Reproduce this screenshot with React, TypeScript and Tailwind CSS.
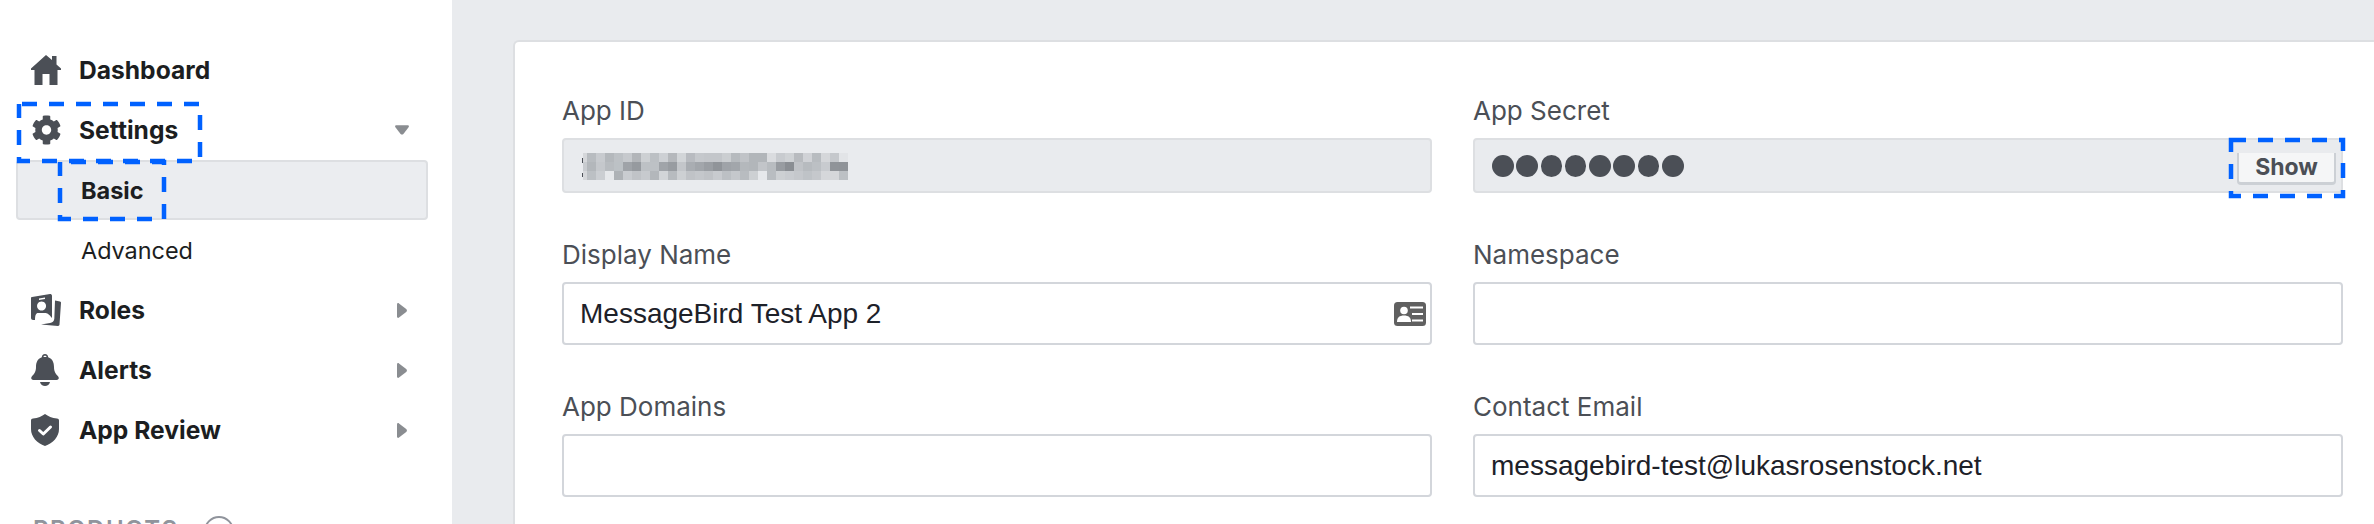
import { FaCog } from 'react-icons/fa'

const mosaicEdge = ['#d5d7da', '#c8cbcf', '#d5d7da']

const mosaic = [
  ['#b8bcc0','#c8cbcf','#b4b8bc','#bdc1c5','#c6c9cd','#b2b5b9','#cdd0d3','#bcc0c4','#cdd0d4','#b5b8bc','#d2d5d8','#b8bbc0','#c5c8cc','#c3c6ca','#c3c6ca','#cbced1','#b6babe','#c0c3c7','#b2b6ba','#b2b6ba','#dadcdf','#c8cbcf','#cfd2d5','#b8bbbf','#d0d2d6','#b8bcc0','#d5d7da','#c5c8cc','#e2e4e7'],
  ['#b3b7bb','#c5c8cc','#b8bcc0','#bcc1c5','#9fa3a8','#969a9f','#bdc1c5','#bdc1c5','#a0a4a9','#989ca1','#c3c6ca','#a9adb2','#a2a6ab','#9a9ea3','#909499','#9fa3a8','#a2a6ab','#b4b8bc','#b2b6ba','#c2c5c9','#b8bcc0','#989ca1','#8a8e93','#c0c3c7','#b7bbbf','#bcc0c4','#c8cbcf','#909499','#8f9398'],
  ['#bcc0c4','#cbced2','#e6e8eb','#aeb2b6','#c9ccd0','#c0c3c7','#c7cace','#b3b7bb','#d2d5d8','#b7bbbf','#cdd0d3','#c0c3c7','#c4c7cb','#c0c3c7','#c8cbcf','#bcc0c4','#c5c8cc','#b8bcc0','#cdd0d3','#e6e8eb','#b9bdc1','#cdd0d3','#c9ccd0','#c5c8cc','#bfc3c7','#c5c8cc','#d5d7da','#d5d7da','#bcc0c4'],
]

function HomeIcon() {
  return (
    <svg viewBox="0 0 30 30" className="h-[30px] w-[30px] fill-[#4b4f56]">
      <path d="M15 0 21 5V1h4.500v8.500L30 13.500V15h-3.500v15h-8V19h-7v11h-8V15H0v-1.500Z" />
    </svg>
  )
}

function RolesIcon() {
  return (
    <svg viewBox="0 0 30 32" className="h-[32px] w-[30px]">
      <path fill="#4b4f56" fillRule="evenodd" d="M1 3 19 0c1 0 2 .5 2 2v22c-3-4-5-5-7-5H7c-2 0-3 2-3 7H2c-1 0-2-1-2-2V4c0-.5.500-1 1-1ZM8 4.500v1.500l6-1V3.500ZM10.500 7.500a4.500 4.500 0 1 0 .1 0Z" />
      <circle cx="10.500" cy="12" r="2.600" fill="#fff" />
      <path fill="#4b4f56" d="M24 6.500 29 7.500c.6.100 1 .6 1 1.200l-1.500 21.800c0 .9-.8 1.500-1.600 1.400L10 30.500l9-1.500c2.500-.4 4-1.500 4.300-4Z" />
    </svg>
  )
}

function BellIcon() {
  return (
    <svg viewBox="0 0 28 32" className="h-[32px] w-[28px] fill-[#4b4f56]">
      <path fillRule="evenodd" d="M14 0c2 0 3.200 1.300 3.200 3.200C21.500 4.800 23 8.500 23 13c0 5 2 7 4.200 9.500.9 1 1 3.500-1.700 3.500H2.500C-.2 26-.1 23.500.8 22.500 3 20 5 18 5 13c0-4.500 1.500-8.200 5.800-9.800C10.800 1.300 12 0 14 0Zm0 1.700c-.9 0-1.500.6-1.500 1.200h3c0-.6-.6-1.200-1.500-1.200Z" />
      <path d="M9 28h10c-.6 2.400-2.600 4-5 4s-4.400-1.600-5-4Z" />
    </svg>
  )
}

function ShieldIcon() {
  return (
    <svg viewBox="0 0 28 32" className="h-[32px] w-[28px]">
      <path fill="#4b4f56" d="M14 0c3 2.200 7 4 12 4.500 1.200.1 2 .8 2 2V15c0 8-6 14-14 17C6 29 0 23 0 15V6.500c0-1.200.8-1.900 2-2C7 4 11 2.200 14 0Z" />
      <path fill="none" stroke="#fff" strokeWidth="3" strokeLinecap="round" strokeLinejoin="round" d="m8.500 16.500 3.800 3.500 7.200-7" />
    </svg>
  )
}

function CardIcon() {
  return (
    <svg viewBox="0 0 32 24" className="h-[24px] w-[32px]">
      <rect width="32" height="24" rx="3.500" fill="#606060" />
      <circle cx="10" cy="8.500" r="3.800" fill="#fff" />
      <path fill="#fff" d="M3 20c0-4.500 2.500-6.500 7-6.500s7 2 7 6.500Z" />
      <path stroke="#fff" strokeWidth="2" d="M16 5.500h13M18 12h11M18 18.500h11" />
    </svg>
  )
}

function CaretRight() {
  return (
    <svg viewBox="0 0 10 15" className="h-[15px] w-[10px] fill-[#8a8d91]">
      <path d="M0 1.500C0 .3 1-.3 2 .4l7.200 5.600c1 .8 1 2.200 0 3L2 14.600c-1 .7-2 .100-2-1.100Z" />
    </svg>
  )
}

function CaretDown() {
  return (
    <svg viewBox="0 0 15 10" className="h-[10px] w-[15px] fill-[#8a8d91]">
      <path d="M1.500 0C.3 0-.3 1 .4 2L6 9.200c.8 1 2.200 1 3 0L14.600 2c.7-1 .1-2-1.100-2Z" />
    </svg>
  )
}

// blue annotation drawn over the screenshot
function Dashes({ className, w, h, offset }: { className: string; w: number; h: number; offset: number }) {
  return (
    <svg width={w + 6} height={h + 6} className={`absolute z-10 pointer-events-none ${className}`}>
      <rect x="3" y="3" width={w} height={h} fill="none" stroke="#0061ff" strokeWidth="4.500" strokeDasharray="15 12" strokeDashoffset={offset} />
    </svg>
  )
}

function NavRow({ icon, label, caret }: { icon: React.ReactNode; label: string; caret?: React.ReactNode }) {
  return (
    <div className="flex h-[60px] items-center pl-[31px] pr-[43px]">
      <div className="flex w-[48px] shrink-0">{icon}</div>
      <span className="pt-[1px] text-[24.600px] font-bold text-[#1c1e21]">{label}</span>
      <div className="ml-auto flex w-[14px] justify-center">{caret}</div>
    </div>
  )
}

function Field({ label, children }: { label: string; children: React.ReactNode }) {
  return (
    <div>
      <div className="mb-[11px] h-[32px] text-[26px] leading-[32px] text-[#4b4f56]">{label}</div>
      {children}
    </div>
  )
}

function TextBox({ value, children }: { value?: string; children?: React.ReactNode }) {
  return (
    <div className="relative flex h-[63px] items-center rounded border-2 border-[#d3d6db] bg-white px-4 pt-[1px] font-['Liberation_Sans',sans-serif] text-[28px] text-[#1d2129]">
      {value}
      {children}
    </div>
  )
}

export default function App() {
  return (
    <div className="flex h-[524px] overflow-hidden bg-[#e9ebee] font-[Inter,sans-serif]">
      <aside className="relative w-[452px] shrink-0 bg-white pt-[40px]">
        <NavRow icon={<HomeIcon />} label="Dashboard" />
        <NavRow icon={<FaCog className="h-[30px] w-[31px] text-[#4b4f56]" />} label="Settings" caret={<CaretDown />} />
        <div className="ml-[16px] mr-[24px] flex h-[60px] items-center rounded border-2 border-[#dddfe2] bg-[#ebedf0] pl-[63px] pt-[1px] text-[23.500px] font-bold text-[#1c1e21]">
          Basic
        </div>
        <div className="flex h-[60px] items-center pl-[81px] pt-[1px] text-[23.400px] text-[#1c1e21]">Advanced</div>
        <NavRow icon={<RolesIcon />} label="Roles" caret={<CaretRight />} />
        <NavRow icon={<BellIcon />} label="Alerts" caret={<CaretRight />} />
        <NavRow icon={<ShieldIcon />} label="App Review" caret={<CaretRight />} />
        <div className="mt-[55px] flex items-start pl-[33px]">
          <span className="w-[144px] whitespace-nowrap text-[24px] font-semibold leading-[30px] tracking-[1.500px] text-[#90949c]">PRODUCTS</span>
          <div className="ml-[27px] mt-[1px] flex h-[30px] w-[30px] items-center justify-center rounded-full border-2 border-[#90949c] text-[#90949c]">+</div>
        </div>
        <Dashes className="left-[16px] top-[101px]" w={181} h={57} offset={24} />
        <Dashes className="left-[57px] top-[159px]" w={104} h={57} offset={16} />
      </aside>

      <main className="min-w-0 flex-1 pl-[61px] pt-[40px]">
        <div className="relative h-[600px] rounded-tl-[6px] border-2 border-r-0 border-[#dddfe2] bg-white pl-[47px] pr-[31px] pt-[53px]">
          <div className="grid grid-cols-2 gap-x-[41px] gap-y-[46px]">
            <Field label="App ID">
              <div className="relative h-[55px] rounded border-2 border-[#dddfe2] bg-[#e9ebee]">
                <svg width="270" height="32" className="absolute left-[18px] top-[11px]">
                  <rect x="0" y="7" width="1.500" height="5" fill="#4b4f56" />
                  <rect x="0" y="22" width="1.500" height="4" fill="#4b4f56" />
                  {mosaicEdge.map((color, r) => (
                    <rect key={r} x="1" y={2 + r * 9} width="4" height="9" fill={color} />
                  ))}
                  {mosaic.map((row, r) =>
                    row.map((color, c) => <rect key={`${r}-${c}`} x={5 + c * 9} y={2 + r * 9} width="9" height="9" fill={color} />),
                  )}
                </svg>
              </div>
            </Field>
            <Field label="App Secret">
              <div className="relative flex h-[55px] items-center gap-[2.800px] rounded border-2 border-[#dddfe2] bg-[#e9ebee] pl-[17px] pt-[1px]">
                {[0, 1, 2, 3, 4, 5, 6, 7].map(i => (
                  <div key={i} className="h-[21.500px] w-[21.500px] rounded-full bg-[#4b4f56]" />
                ))}
                <div className="absolute right-[5px] top-[13px] flex h-[32px] w-[99px] items-center justify-center rounded-b border-2 border-t-0 border-[#ccd0d5] border-b-[3px] bg-[#f5f6f7] text-[23px] font-bold text-[#4b4f56]">
                  Show
                </div>
              </div>
            </Field>
            <Field label="Display Name">
              <TextBox value="MessageBird Test App 2">
                <div className="absolute right-[4px] top-[18px] flex">
                  <CardIcon />
                </div>
              </TextBox>
            </Field>
            <Field label="Namespace">
              <TextBox />
            </Field>
            <Field label="App Domains">
              <TextBox />
            </Field>
            <Field label="Contact Email">
              <TextBox value="messagebird-test@lukasrosenstock.net" />
            </Field>
          </div>
          <Dashes className="left-[1713px] top-[95px]" w={112} h={56} offset={0} />
        </div>
      </main>
    </div>
  )
}
